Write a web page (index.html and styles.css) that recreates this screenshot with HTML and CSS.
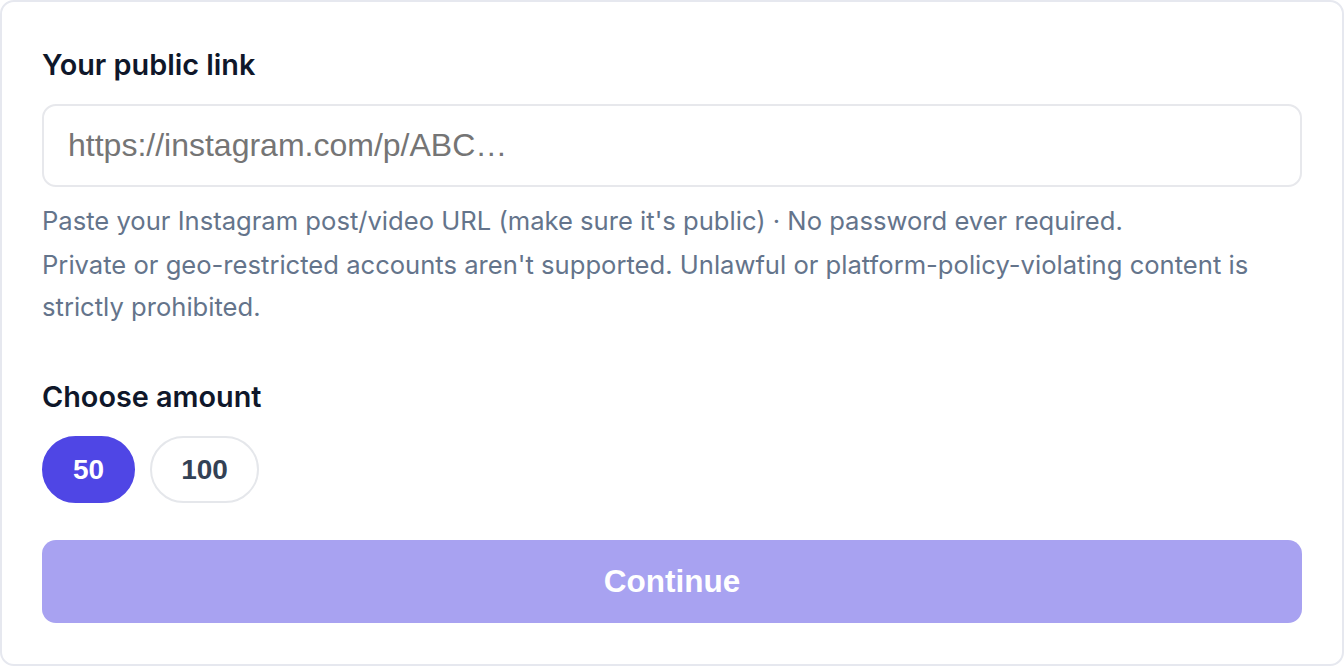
FILE: index.html
```html
<!DOCTYPE html>
<html lang="en">
<head>
<meta charset="utf-8">
<title>Your public link</title>
<link rel="stylesheet" href="styles.css">
</head>
<body>
<div class="card">
  <label class="label" for="link">Your public link</label>
  <input id="link" class="link-input" type="text" placeholder="https://instagram.com/p/ABC…">
  <div class="help">
    <p>Paste your Instagram post/video URL (make sure it's public) · No password ever required.</p>
    <p>Private or geo-restricted accounts aren't supported. Unlawful or platform-policy-violating content is strictly prohibited.</p>
  </div>
  <div class="amount">
    <div class="label">Choose amount</div>
    <div class="pills">
      <button class="pill pill-active" type="button">50</button>
      <button class="pill" type="button">100</button>
    </div>
  </div>
  <button class="continue" type="button">Continue</button>
</div>
</body>
</html>
```
FILE: styles.css
```css
* { box-sizing: border-box; }
html, body { margin: 0; padding: 0; background: #ffffff; }
body { font-family: Inter, "Liberation Sans", sans-serif; }

.card {
  width: 1344px;
  border: 2px solid #e6e8ef;
  border-radius: 14px;
  background: #fff;
  padding: 42px 40px 41px 40px;
  display: flex;
  flex-direction: column;
}

.label {
  display: block;
  font-size: 28.8px;
  line-height: 42px;
  font-weight: 600;
  color: #0f172a;
}

.link-input {
  margin-top: 18px;
  height: 83px;
  width: 100%;
  border: 2px solid #e7e8ec;
  border-radius: 14px;
  padding: 0 24px;
  font-family: "Liberation Sans", Arial, sans-serif;
  font-size: 32px;
  color: #111827;
  background: #fff;
  outline: none;
}
.link-input::placeholder { color: #757575; }

.help { margin-top: 13px; }
.help p {
  margin: 0;
  font-size: 25.6px;
  line-height: 42px;
  color: #64748b;
}
.help p + p { margin-top: 2px; }

.amount { margin-top: 48px; }

.pills {
  margin-top: 18px;
  display: flex;
  gap: 15px;
}

.pill {
  height: 67px;
  padding: 0 29px;
  border-radius: 34px;
  border: 2px solid #e5e7eb;
  background: #fff;
  color: #334155;
  font-family: "Liberation Sans", Arial, sans-serif;
  font-weight: 700;
  font-size: 28px;
  line-height: 1;
  display: inline-flex;
  align-items: center;
  justify-content: center;
}
.pill-active {
  background: #4f46e5;
  border-color: #4f46e5;
  color: #fff;
}

.continue {
  margin-top: 37px;
  height: 83px;
  width: 100%;
  border: none;
  border-radius: 14px;
  background: #a8a2f1;
  color: #fff;
  font-family: "Liberation Sans", Arial, sans-serif;
  font-weight: 700;
  font-size: 31.5px;
}
```
